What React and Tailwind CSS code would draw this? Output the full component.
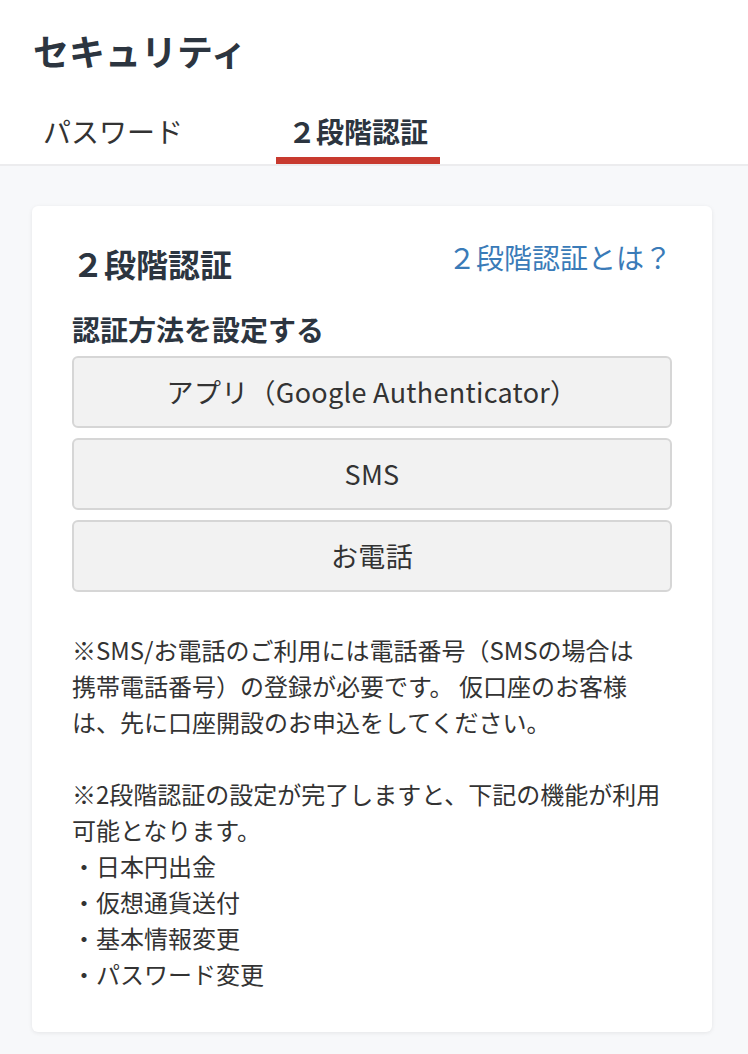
import React, { useState } from 'react';

const tabs = ['パスワード', '２段階認証'];
const methods = ['アプリ（Google Authenticator）', 'SMS', 'お電話'];
const features = ['日本円出金', '仮想通貨送付', '基本情報変更', 'パスワード変更'];

const Security = () => {
  const [active, setActive] = useState(1);

  return (
    <div className="min-h-[1054px] bg-[#f7f8fa] font-['Noto_Sans_CJK_JP','Noto_Sans',sans-serif]">
      <div className="bg-white border-b-2 border-[#ececee]">
        <h1 className="pl-[33px] pt-[30px] text-[36px] leading-[40px] font-bold text-[#2c3540]">セキュリティ</h1>
        <div className="flex gap-[81px] pl-[31px]">
          {tabs.map((tab, i) => (
            <button
              key={tab}
              onClick={() => setActive(i)}
              className={`w-[164px] h-[94px] pt-[35px] text-center text-[28px] leading-[36px] border-b-[7px] self-start ${
                active === i
                  ? 'font-bold text-[#2c3540] border-[#c83a2f]'
                  : 'text-[#333] border-transparent'
              }`}
            >
              {tab}
            </button>
          ))}
        </div>
      </div>

      <div className="pt-10 pb-6">
        <div className="ml-8 w-[680px] bg-white rounded-md shadow-[0_1px_4px_rgba(0,0,0,0.08)] px-10 pt-10 pb-10">
          <div className="flex justify-between items-start">
            <h2 className="text-[32px] leading-[34px] font-bold text-[#2c3540]">２段階認証</h2>
            <a href="#" className="text-[28px] leading-[22px] text-[#3a7bb8]">２段階認証とは？</a>
          </div>

          <h3 className="mt-8 text-[28px] leading-[34px] font-bold text-[#2c3540]">認証方法を設定する</h3>

          <div className="mt-[10px] flex flex-col gap-[10px]">
            {methods.map((m) => (
              <button
                key={m}
                className="h-[72px] w-full bg-[#f2f2f2] border-2 border-[#d6d6d6] rounded-md text-[27px] tracking-[0.3px] text-[#333] flex items-center justify-center"
              >
                {m}
              </button>
            ))}
          </div>

          <div className="mt-10 text-[24px] leading-[36px] text-[#333]">
            <p>
              ※SMS/お電話のご利用には電話番号（SMSの場合は<br />
              携帯電話番号）の登録が必要です。 仮口座のお客様<br />
              は、先に口座開設のお申込をしてください。
            </p>
            <p className="mt-9">
              ※2段階認証の設定が完了しますと、下記の機能が利用<br />
              可能となります。
            </p>
            {features.map((f) => (
              <p key={f}>・{f}</p>
            ))}
          </div>
        </div>
      </div>
    </div>
  );
};

export default Security;
